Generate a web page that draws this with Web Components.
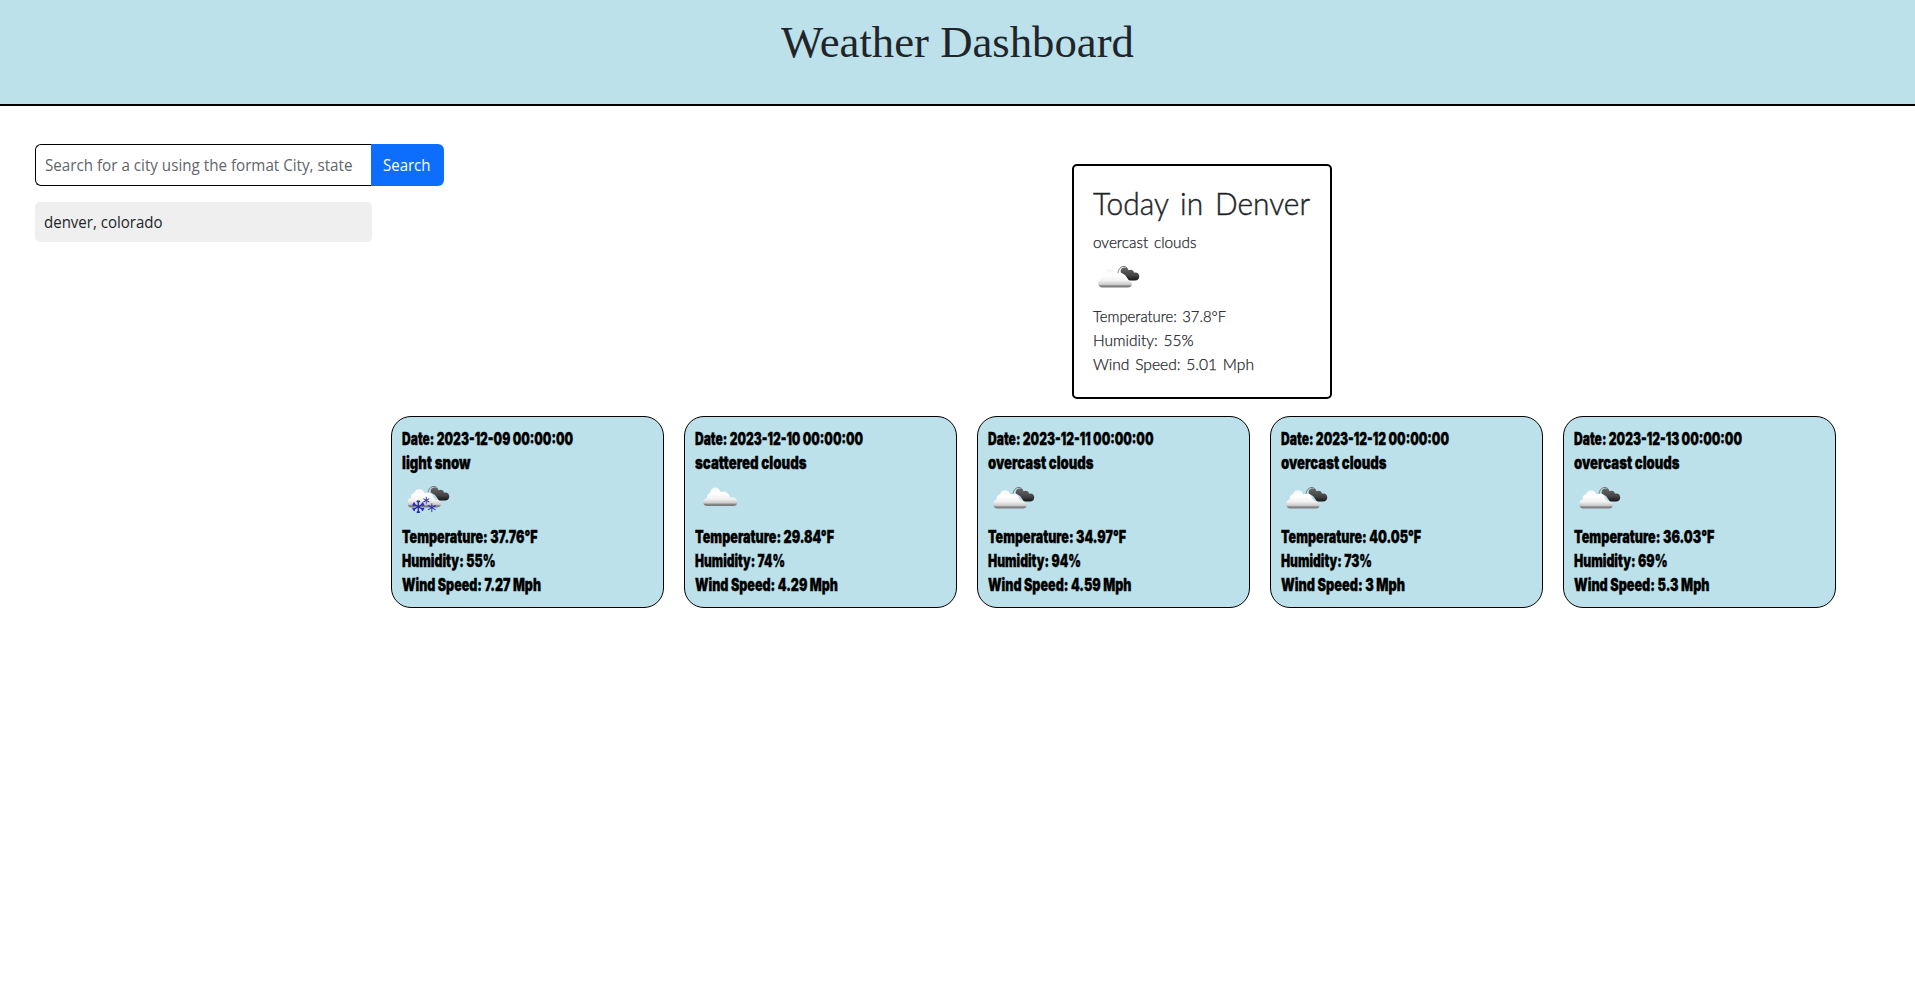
<!DOCTYPE html>
<html lang="en">
<head>
<meta charset="utf-8">
<title>Weather Dashboard</title>
<style>
body{margin:0;background:#fff;color:#212529}
</style>
</head>
<body>
<weather-app></weather-app>
<script>
// One line of text, condensed or widened to the width in its "w" attribute.
class FitLine extends HTMLElement{
  constructor(){
    super();
    this.attachShadow({mode:'open'}).innerHTML='<style>:host{display:block;white-space:nowrap}span{display:inline-block;transform-origin:0 50%}</style><span><slot></slot></span>';
  }
  connectedCallback(){
    const w=+this.getAttribute('w');
    this.style.width=w+'px';
    const s=this.shadowRoot.querySelector('span');
    s.style.transform='none';
    const n=s.getBoundingClientRect().width;
    if(n) s.style.transform='scaleX('+w/n+')';
  }
}

const flake=(x,y,r)=>`<g transform="translate(${x} ${y})" stroke="#2929b5" stroke-width="${r>5?1.3:.9}" fill="none">${[0,60,120,180,240,300].map(a=>`<path transform="rotate(${a})" d="M0 0V${-r}${r>5?`M${-r*.25} ${-r*.95}L0 ${-r*.68}L${r*.25} ${-r*.95}`:''}"/>`).join('')}</g>`;
const darkCloud='<path d="M25 19C25.4 15 28 12.3 31 12.5C32.5 12.5 34 13.5 34.6 14.7" fill="none" stroke="#777" stroke-width="1"/><path d="M27.8 18.5C27.2 15.5 29 13.7 31.4 13.6C33.6 13.5 35 14.8 35.7 16.2C38 14.8 40.8 16.2 41 18.7C43.7 17.8 46.4 19.6 46.3 22.5C46.2 25.2 44.4 26.6 42 26.6H36L32 21Z" fill="url(#d)"/>';
const frontCloud='<path d="M9.2 33.6C6.7 33.6 5.2 31.8 5.2 29.1C5.2 26.5 6.4 24.8 8.8 24.4C8.2 21.5 10 19.5 12.1 19.3C12.7 16.8 14.4 15.2 17 15.2C19.6 15.2 21.5 16.6 22.4 19.6C25.4 17.8 30.7 18.5 31.3 24.3C32.4 24.5 33.2 25.2 33.5 26.3C36.2 25.8 38.8 27.2 38.8 29.8C38.8 32.4 37.2 33.6 34.8 33.6Z" fill="url(#w)"/>';
const ICONS={
  overcast:darkCloud+frontCloud,
  snow:`<g transform="translate(1 -1)">${darkCloud}</g><g transform="translate(.2 -1.2)">${frontCloud}</g>`+flake(16.3,31.7,6.2)+flake(24.3,25.3,3.4)+flake(29.8,32.7,4.4),
  scattered:'<path d="M12 31C9.7 31 8.3 29.7 8.3 27.5C8.3 25 9.8 23.3 12 23C11.9 20.4 13.1 18.6 14.9 18.3C15.4 14.8 17.2 12.4 20.2 12.4C22.8 12.4 24.6 14 25.5 17.1C29.2 15.8 34.4 17.2 35.1 22.4C38.5 21.6 42.2 23.3 42.2 26.9C42.2 29.8 40.6 31 38.4 31Z" fill="url(#w)"/>'
};
class WeatherIcon extends HTMLElement{
  constructor(){super();this.attachShadow({mode:'open'})}
  connectedCallback(){
    this.shadowRoot.innerHTML=`<style>:host{display:block;width:50px;height:50px}svg{display:block}</style>
    <svg width="50" height="50" viewBox="0 0 50 50" aria-hidden="true"><defs>
    <linearGradient id="w" x1="0" y1="0" x2="0" y2="1"><stop stop-color="#f4f4f4"/><stop offset=".3" stop-color="#fff"/><stop offset=".62" stop-color="#f2f2f2"/><stop offset=".84" stop-color="#c9c9c9"/><stop offset=".9" stop-color="#878787"/><stop offset="1" stop-color="#777"/></linearGradient>
    <linearGradient id="d" x1="0" y1="0" x2="0" y2="1"><stop stop-color="#666"/><stop offset=".6" stop-color="#444"/><stop offset="1" stop-color="#161616"/></linearGradient></defs>${ICONS[this.getAttribute('kind')]}</svg>`;
  }
}

class PageHeader extends HTMLElement{
  constructor(){
    super();
    this.attachShadow({mode:'open'}).innerHTML=`<style>
    :host{display:flex;justify-content:center;box-sizing:border-box;height:106px;padding-top:18px;background:#bce1ea;border-bottom:2px solid #000}
    h1{margin:0;font:400 43.5px/48px "Liberation Serif",serif}</style><h1><slot></slot></h1>`;
  }
}
class CitySearch extends HTMLElement{
  constructor(){
    super();
    this.attachShadow({mode:'open'}).innerHTML=`<style>
    :host{display:block;width:409px;font:400 15.5px/24px "Open Sans","Noto Sans",sans-serif}
    form{display:flex;height:42px;margin:0}
    .field{box-sizing:border-box;width:336px;padding:8px 0 0 8.5px;border:1px solid #000;border-right:0;border-radius:6px 0 0 6px;color:#60666c}
    button{width:73px;padding:0 0 0 12px;border:0;border-radius:0 6px 6px 0;background:#0d6efd;color:#fff;font:inherit;text-align:left}
    .past{box-sizing:border-box;width:337px;height:40px;margin-top:16px;padding:8px 8.5px;border-radius:5px;background:#efefef}
    </style><form><div class="field"><fit-line w="307.5">Search for a city using the format City, state</fit-line></div><button type="button"><fit-line w="47.5">Search</fit-line></button></form>
    <div class="past"><fit-line w="118.5">denver, colorado</fit-line></div>`;
  }
}
class TodayCard extends HTMLElement{
  constructor(){
    super();
    this.attachShadow({mode:'open'}).innerHTML=`<style>
    :host{display:block;box-sizing:border-box;width:260px;height:235px;padding:17.6px 19.3px;border:2px solid #000;border-radius:5px;font:300 15.5px/24px Lato,sans-serif;word-spacing:1.5px;-webkit-text-stroke:.25px #212529}
    h2{margin:0 0 8px;font-size:32px;font-weight:300;line-height:38.4px;word-spacing:4px;-webkit-text-stroke:.45px #212529}
    </style><h2><fit-line w="217">Today in Denver</fit-line></h2>
    <fit-line w="103.5">overcast clouds</fit-line>
    <weather-icon kind="overcast"></weather-icon>
    <fit-line w="133">Temperature: 37.8°F</fit-line><fit-line w="100.5">Humidity: 55%</fit-line><fit-line w="161">Wind Speed: 5.01 Mph</fit-line>`;
  }
}
class ForecastCard extends HTMLElement{
  constructor(){
    super();
    this.attachShadow({mode:'open'}).innerHTML=`<style>
    :host{display:block;box-sizing:border-box;width:273px;height:192px;padding:10px;border:1px solid #000;border-radius:20px;background:#bce1ea;color:#000;font:900 17.2px/24px Inter,sans-serif;-webkit-text-stroke:.35px #000}
    </style><slot></slot>`;
  }
}
const DAYS=[
 ['snow',['Date: 2023-12-09 00:00:00',171],['light snow',68.5],['Temperature: 37.76°F',135.5],['Humidity: 55%',93.5],['Wind Speed: 7.27 Mph',139]],
 ['scattered',['Date: 2023-12-10 00:00:00',168],['scattered clouds',111.5],['Temperature: 29.84°F',139],['Humidity: 74%',90],['Wind Speed: 4.29 Mph',143]],
 ['overcast',['Date: 2023-12-11 00:00:00',165.5],['overcast clouds',105.5],['Temperature: 34.97°F',138],['Humidity: 94%',93],['Wind Speed: 4.59 Mph',143.5]],
 ['overcast',['Date: 2023-12-12 00:00:00',168],['overcast clouds',105.5],['Temperature: 40.05°F',140],['Humidity: 73%',91],['Wind Speed: 3 Mph',124]],
 ['overcast',['Date: 2023-12-13 00:00:00',168],['overcast clouds',105.5],['Temperature: 36.03°F',140.5],['Humidity: 69%',93.5],['Wind Speed: 5.3 Mph',135.5]]
];
class WeatherApp extends HTMLElement{
  constructor(){
    super();
    const line=([t,w])=>`<fit-line w="${w}">${t}</fit-line>`;
    const cards=DAYS.map(([k,a,b,...r])=>`<forecast-card>${line(a)}${line(b)}<weather-icon kind="${k}"></weather-icon>${r.map(line).join('')}</forecast-card>`).join('');
    this.attachShadow({mode:'open'}).innerHTML=`<style>
    :host{display:block;min-height:981px}
    main{display:grid;grid-template-columns:356px 1fr;padding:38px 0 0 35px}
    city-search{position:relative;z-index:1}
    .results{display:flex;flex-direction:column;gap:17px;width:1445px;padding-top:20px}
    .today{display:flex;padding-left:681px}
    .days{display:flex;gap:20px}
    </style><page-header><fit-line w="353">Weather Dashboard</fit-line></page-header>
    <main><city-search></city-search><section class="results"><div class="today"><today-card></today-card></div><div class="days">${cards}</div></section></main>`;
  }
}
customElements.define('fit-line',FitLine);
customElements.define('weather-icon',WeatherIcon);
customElements.define('page-header',PageHeader);
customElements.define('city-search',CitySearch);
customElements.define('today-card',TodayCard);
customElements.define('forecast-card',ForecastCard);
customElements.define('weather-app',WeatherApp);
</script>
</body>
</html>
